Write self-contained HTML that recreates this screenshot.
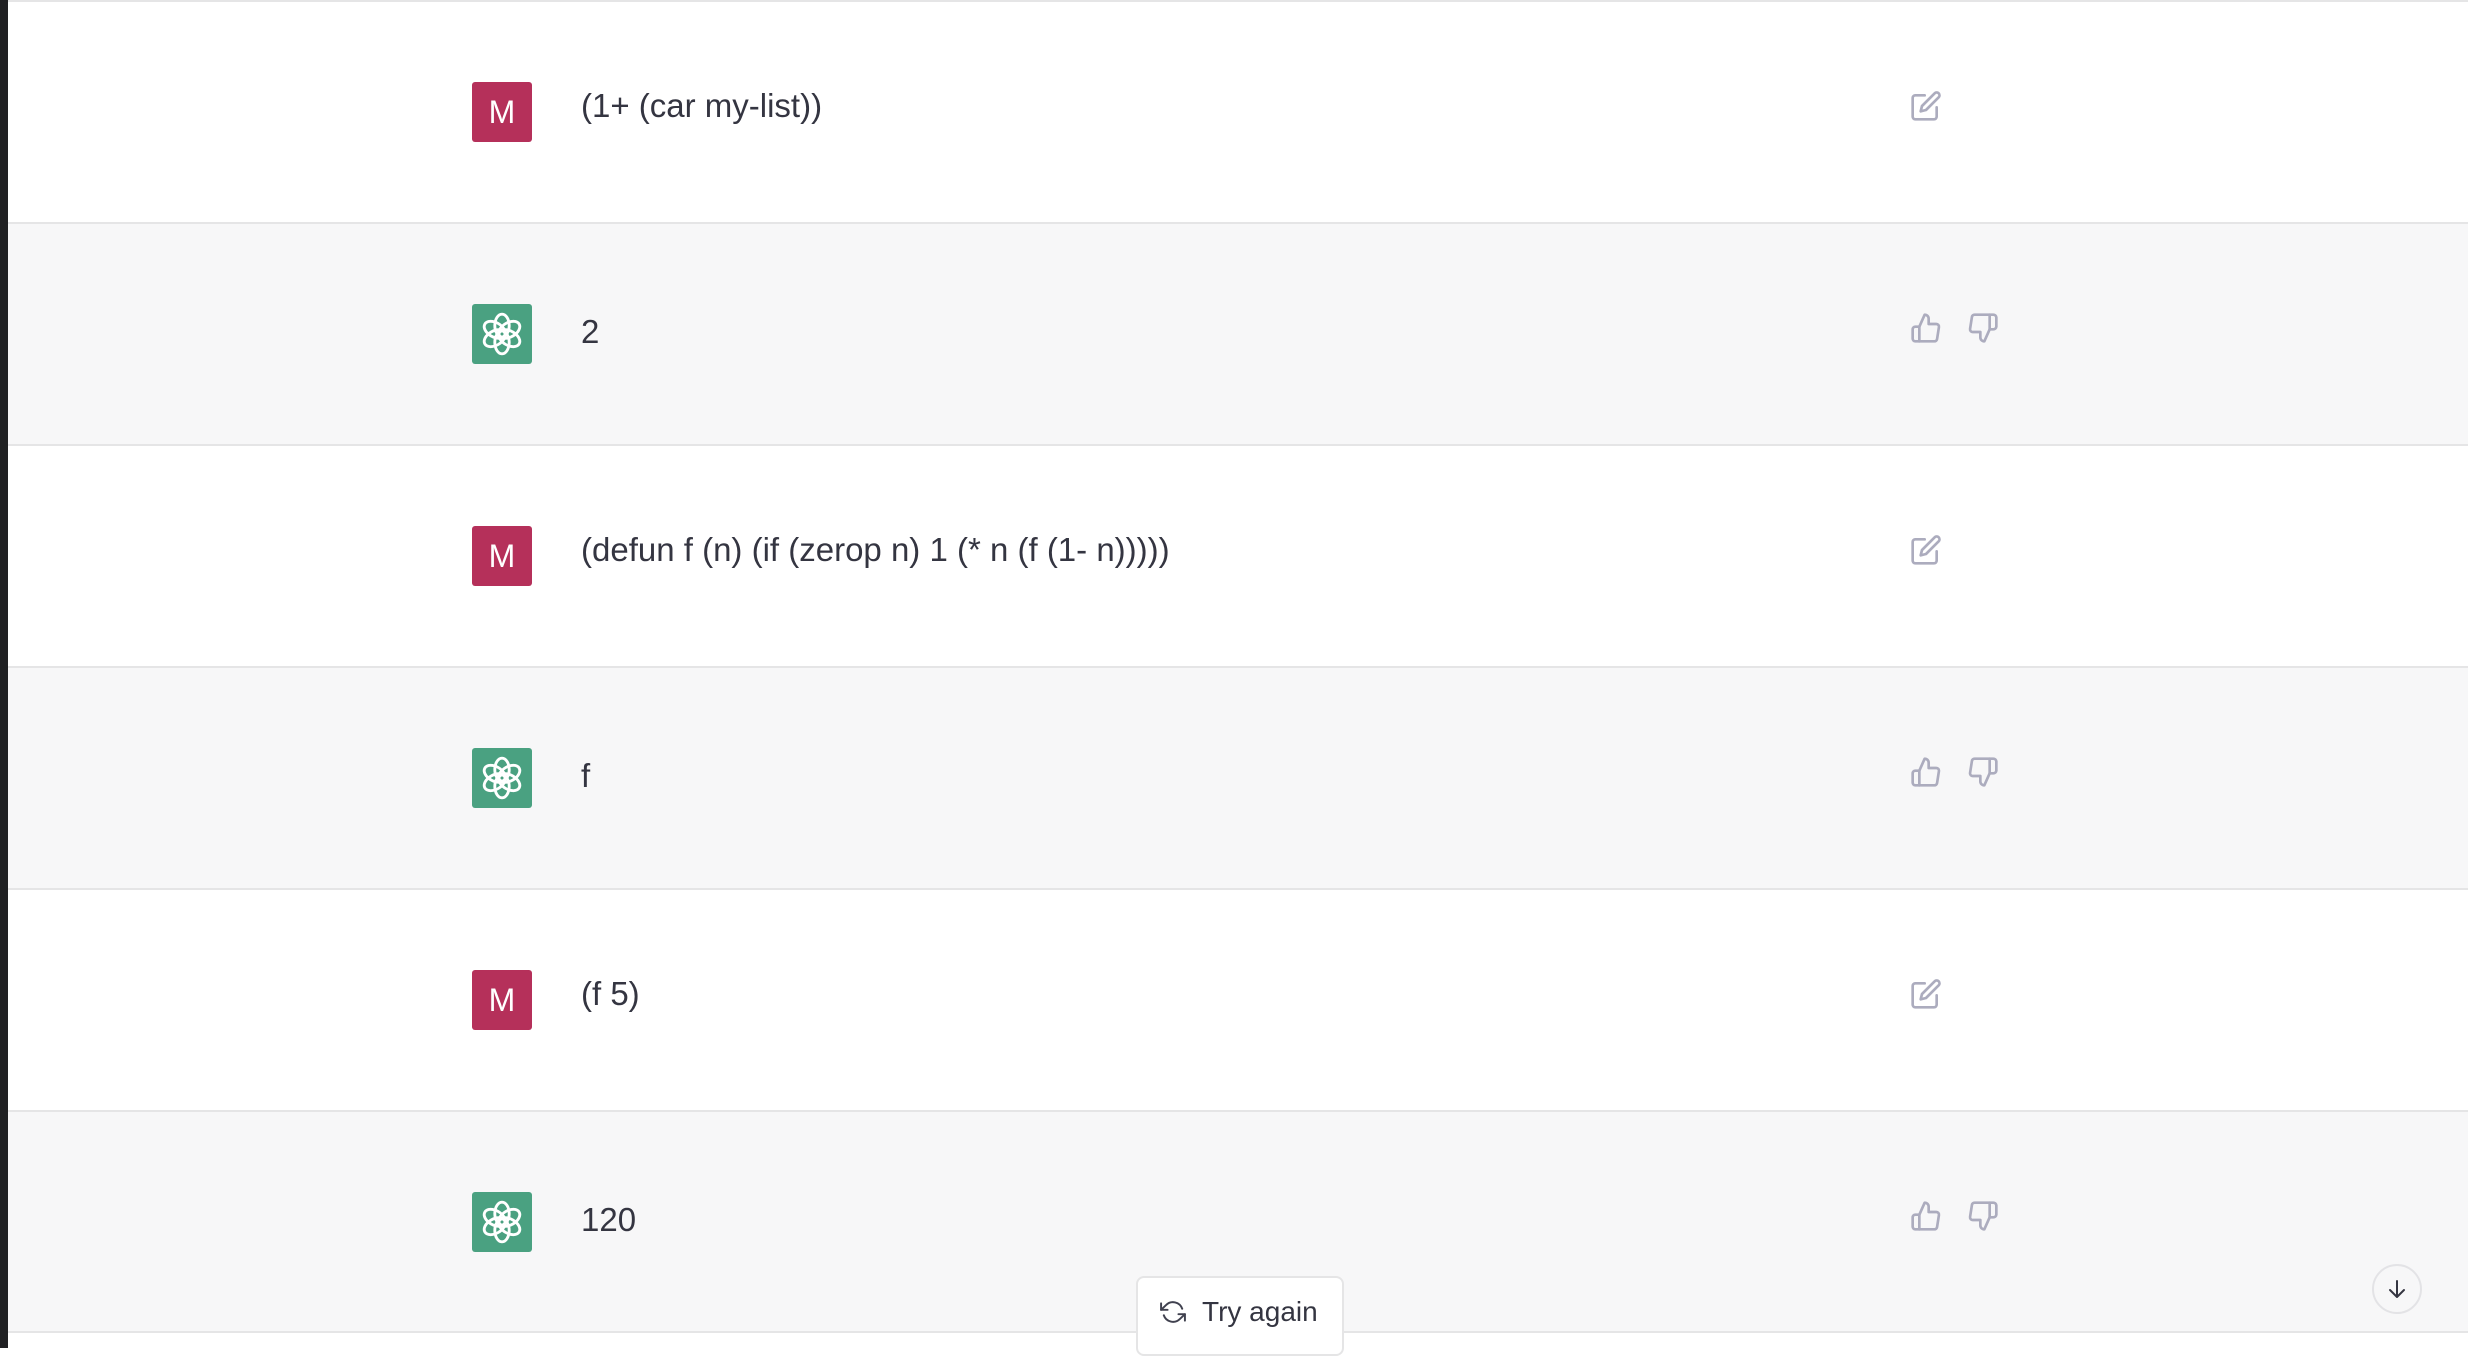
<!DOCTYPE html>
<html><head><meta charset="utf-8"><style>
*{margin:0;padding:0;box-sizing:border-box}
body{width:2468px;height:1348px;overflow:hidden;background:#fff;font-family:"Liberation Sans",sans-serif;position:relative;color:#343541}
.side{position:absolute;left:0;top:0;width:8px;height:1348px;background:#202123}
.row{position:absolute;left:8px;width:2460px;height:222px;border-top:2px solid #e5e5e6}
.g{background:#f7f7f8}
.av{position:absolute;left:464px;top:80px;width:60px;height:60px;border-radius:3px;display:flex;align-items:center;justify-content:center}
.m{background:#b5305a;color:#fff;font-size:32px}
.c{background:#4aa181}
.t{position:absolute;left:573px;font-size:33px;line-height:40px;color:#343541}
.ic{position:absolute;top:92px;width:32px;height:32px}
</style></head><body>
<div class="side"></div>
<svg width="0" height="0" style="position:absolute"><defs>
<symbol id="logo" viewBox="0 0 40 40"><g fill="none" stroke="#fff" stroke-width="2.4">
<ellipse cx="20" cy="13" rx="6" ry="9.5"/>
<ellipse cx="20" cy="13" rx="6" ry="9.5" transform="rotate(60 20 20)"/>
<ellipse cx="20" cy="13" rx="6" ry="9.5" transform="rotate(120 20 20)"/>
<ellipse cx="20" cy="13" rx="6" ry="9.5" transform="rotate(180 20 20)"/>
<ellipse cx="20" cy="13" rx="6" ry="9.5" transform="rotate(240 20 20)"/>
<ellipse cx="20" cy="13" rx="6" ry="9.5" transform="rotate(300 20 20)"/>
</g></symbol>
<symbol id="edit" viewBox="0 0 24 24"><g fill="none" stroke="#acacbe" stroke-width="2" stroke-linecap="round" stroke-linejoin="round"><path d="M11 4H4a2 2 0 0 0-2 2v14a2 2 0 0 0 2 2h14a2 2 0 0 0 2-2v-7"/><path d="M18.5 2.5a2.1 2.1 0 0 1 3 3L12 15l-4 1 1-4 9.5-9.5z"/></g></symbol>
<symbol id="up" viewBox="0 0 24 24"><g fill="none" stroke="#acacbe" stroke-width="2" stroke-linecap="round" stroke-linejoin="round"><path d="M14 9V5a3 3 0 0 0-3-3l-4 9v11h11.3a2 2 0 0 0 2-1.7l1.4-9a2 2 0 0 0-2-2.3H14z"/><path d="M7 22H4a2 2 0 0 1-2-2v-7a2 2 0 0 1 2-2h3"/></g></symbol>
<symbol id="down" viewBox="0 0 24 24"><g fill="none" stroke="#acacbe" stroke-width="2" stroke-linecap="round" stroke-linejoin="round"><path d="M10 15v4a3 3 0 0 0 3 3l4-9V2H5.7a2 2 0 0 0-2 1.7l-1.4 9a2 2 0 0 0 2 2.3H10z"/><path d="M17 2h2.7A2.3 2.3 0 0 1 22 4v7a2.3 2.3 0 0 1-2.3 2H17"/></g></symbol>
</defs></svg>

<div class="row" style="top:0">
<div class="av m">M</div><div class="t" style="top:84px">(1+ (car my-list))</div>
<svg class="ic" style="left:1902px;top:88px"><use href="#edit"/></svg></div>
<div class="row g" style="top:222px">
<div class="av c"><svg width="48" height="48"><use href="#logo"/></svg></div><div class="t" style="top:88px">2</div>
<svg class="ic" style="left:1902px;top:88px"><use href="#up"/></svg><svg class="ic" style="left:1959px;top:88px"><use href="#down"/></svg></div>
<div class="row" style="top:444px">
<div class="av m">M</div><div class="t" style="top:84px">(defun f (n) (if (zerop n) 1 (* n (f (1- n)))))</div>
<svg class="ic" style="left:1902px;top:88px"><use href="#edit"/></svg></div>
<div class="row g" style="top:666px">
<div class="av c"><svg width="48" height="48"><use href="#logo"/></svg></div><div class="t" style="top:88px">f</div>
<svg class="ic" style="left:1902px;top:88px"><use href="#up"/></svg><svg class="ic" style="left:1959px;top:88px"><use href="#down"/></svg></div>
<div class="row" style="top:888px">
<div class="av m">M</div><div class="t" style="top:84px">(f 5)</div>
<svg class="ic" style="left:1902px;top:88px"><use href="#edit"/></svg></div>
<div class="row g" style="top:1110px">
<div class="av c"><svg width="48" height="48"><use href="#logo"/></svg></div><div class="t" style="top:88px">120</div>
<svg class="ic" style="left:1902px;top:88px"><use href="#up"/></svg><svg class="ic" style="left:1959px;top:88px"><use href="#down"/></svg></div>
<div style="position:absolute;left:8px;top:1331px;width:2460px;height:2px;background:#e5e5e6"></div>

<div style="position:absolute;left:1136px;top:1276px;width:208px;height:80px;background:#fff;border:2px solid #e5e5e6;border-radius:8px">
<svg style="position:absolute;left:22px;top:21px" width="26" height="26" viewBox="0 0 24 24"><g fill="none" stroke="#40414f" stroke-width="1.8" stroke-linecap="round" stroke-linejoin="round"><path d="M1 4v6h6"/><path d="M23 20v-6h-6"/><path d="M20.5 9A9 9 0 0 0 5.6 5.6L1 10m22 4-4.6 4.4A9 9 0 0 1 3.5 15"/></g></svg>
<div style="position:absolute;left:64px;top:18px;font-size:28px;color:#343541">Try again</div></div>

<div style="position:absolute;left:2372px;top:1264px;width:50px;height:50px;border:2px solid #e3e3e6;border-radius:50%;background:#f7f7f8">
<svg style="position:absolute;left:11px;top:11px" width="24" height="24" viewBox="0 0 24 24"><g fill="none" stroke="#343541" stroke-width="2" stroke-linecap="round" stroke-linejoin="round"><path d="M12 4v16M5 13l7 7 7-7"/></g></svg></div>
</body></html>
